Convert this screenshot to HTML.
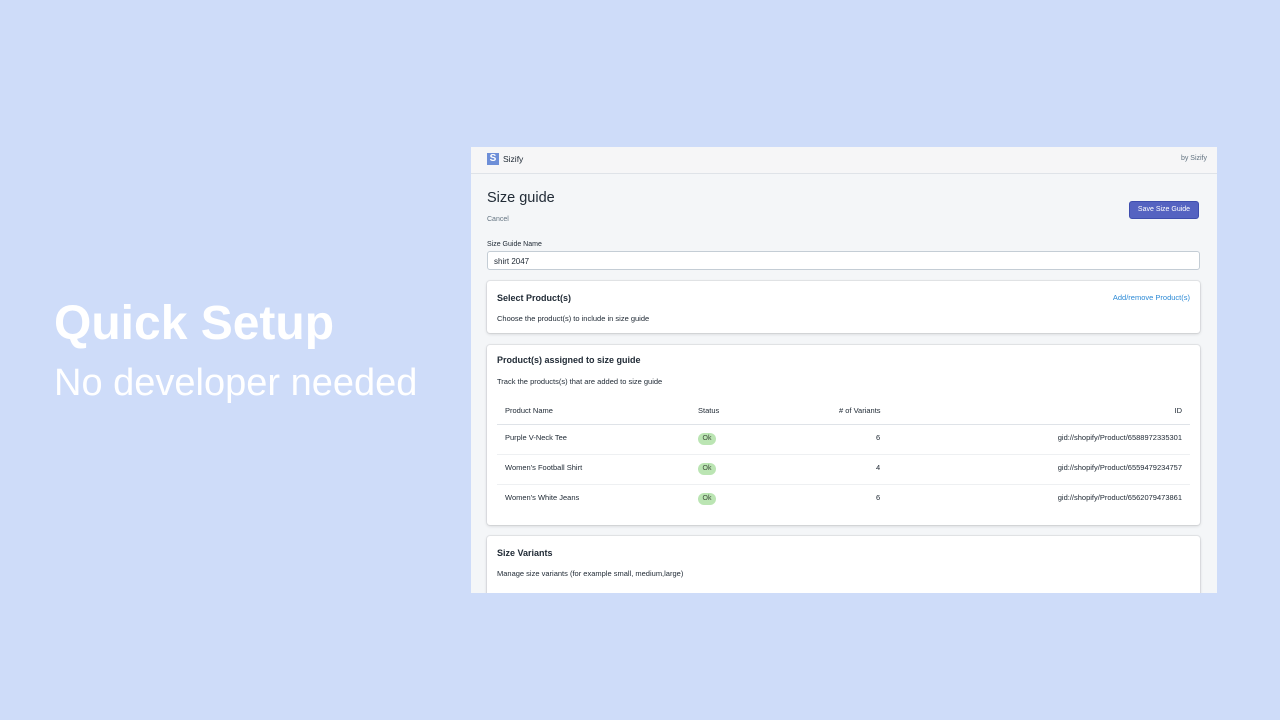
<!DOCTYPE html>
<html><head><style>
*{margin:0;padding:0;box-sizing:border-box}
body{width:1280px;height:720px;background:#cedcf9;font-family:"Liberation Sans",sans-serif;position:relative;overflow:hidden;color:#212b36}
.a{position:absolute}
.h1{left:54px;top:296px;font-size:48px;font-weight:bold;color:#fff}
.h2{left:54px;top:362px;font-size:38px;color:#fff}
.panel{left:471px;top:147px;width:746px;height:446px;background:#f4f6f8;overflow:hidden;font-size:7.5px}
.top{left:0;top:0;width:746px;height:27px;background:#f6f6f7;border-bottom:1px solid #dfe3e8}
.card{background:#fff;border-radius:3px;box-shadow:0 0 0 1px rgba(63,63,68,.07),0 1px 3px rgba(63,63,68,.2)}
.b{font-size:9px;font-weight:bold}
.ok{position:absolute;left:211px;width:18px;height:12px;background:#bbe5b3;border-radius:6px;font-size:7px;line-height:12px;text-align:center;color:#414f3e}
</style></head><body>
<div class="a h1">Quick Setup</div>
<div class="a h2">No developer needed</div>
<div class="a panel">
<div class="a top">
 <div class="a" style="left:16px;top:6px;width:12px;height:12px;background:#6e8fd8;color:#fff;font-size:10px;font-weight:bold;text-align:center;line-height:12px">S</div>
 <div class="a" style="left:32px;top:7px;font-size:8.5px">Sizify</div>
 <div class="a" style="right:10px;top:8px;font-size:7px;color:#637381">by Sizify</div>
</div>
<div class="a" style="left:16px;top:43px;font-size:14.5px;font-weight:500">Size guide</div>
<div class="a" style="left:16px;top:69px;font-size:7px;color:#637381">Cancel</div>
<div class="a" style="left:658px;top:54px;width:70px;height:18px;background:#5563c1;border:1px solid #3f4eae;border-radius:3px;color:#fff;font-size:7px;text-align:center;line-height:16px">Save Size Guide</div>
<div class="a" style="left:16px;top:94px;font-size:7px">Size Guide Name</div>
<div class="a" style="left:16px;top:104px;width:713px;height:19px;background:#fff;border:1px solid #c4cdd5;border-radius:3px;font-size:8px;padding:5px 6px">shirt 2047</div>
<div class="a card" style="left:16px;top:134px;width:713px;height:52px">
 <div class="a b" style="left:10px;top:12px">Select Product(s)</div>
 <div class="a" style="right:10px;top:12px;color:#2c8ad6">Add/remove Product(s)</div>
 <div class="a" style="left:10px;top:33px">Choose the product(s) to include in size guide</div>
</div>
<div class="a card" style="left:16px;top:198px;width:713px;height:180px">
 <div class="a b" style="left:10px;top:10px">Product(s) assigned to size guide</div>
 <div class="a" style="left:10px;top:32px">Track the products(s) that are added to size guide</div>
 <div class="a" style="left:10px;top:79px;width:693px;border-top:1px solid #dfe3e8"></div>
 <div class="a" style="left:10px;top:109px;width:693px;border-top:1px solid #eef0f2"></div>
 <div class="a" style="left:10px;top:139px;width:693px;border-top:1px solid #eef0f2"></div>
 <div class="a" style="left:18px;top:61px">Product Name</div>
 <div class="a" style="left:211px;top:61px">Status</div>
 <div class="a" style="left:352px;top:61px">#&nbsp;of Variants</div>
 <div class="a" style="right:18px;top:61px">ID</div>
 <div class="a" style="left:18px;top:88px">Purple V-Neck Tee</div>
 <div class="a" style="left:18px;top:118px">Women's Football Shirt</div>
 <div class="a" style="left:18px;top:148px">Women's White Jeans</div>
 <div class="ok" style="top:88px">Ok</div>
 <div class="ok" style="top:118px">Ok</div>
 <div class="ok" style="top:148px">Ok</div>
 <div class="a" style="left:389px;top:88px">6</div>
 <div class="a" style="left:389px;top:118px">4</div>
 <div class="a" style="left:389px;top:148px">6</div>
 <div class="a" style="right:18px;top:88px">gid://shopify/Product/6588972335301</div>
 <div class="a" style="right:18px;top:118px">gid://shopify/Product/6559479234757</div>
 <div class="a" style="right:18px;top:148px">gid://shopify/Product/6562079473861</div>
</div>
<div class="a card" style="left:16px;top:389px;width:713px;height:80px">
 <div class="a b" style="left:10px;top:12px">Size Variants</div>
 <div class="a" style="left:10px;top:33px">Manage size variants (for example small, medium,large)</div>
</div>
</div>
</body></html>
